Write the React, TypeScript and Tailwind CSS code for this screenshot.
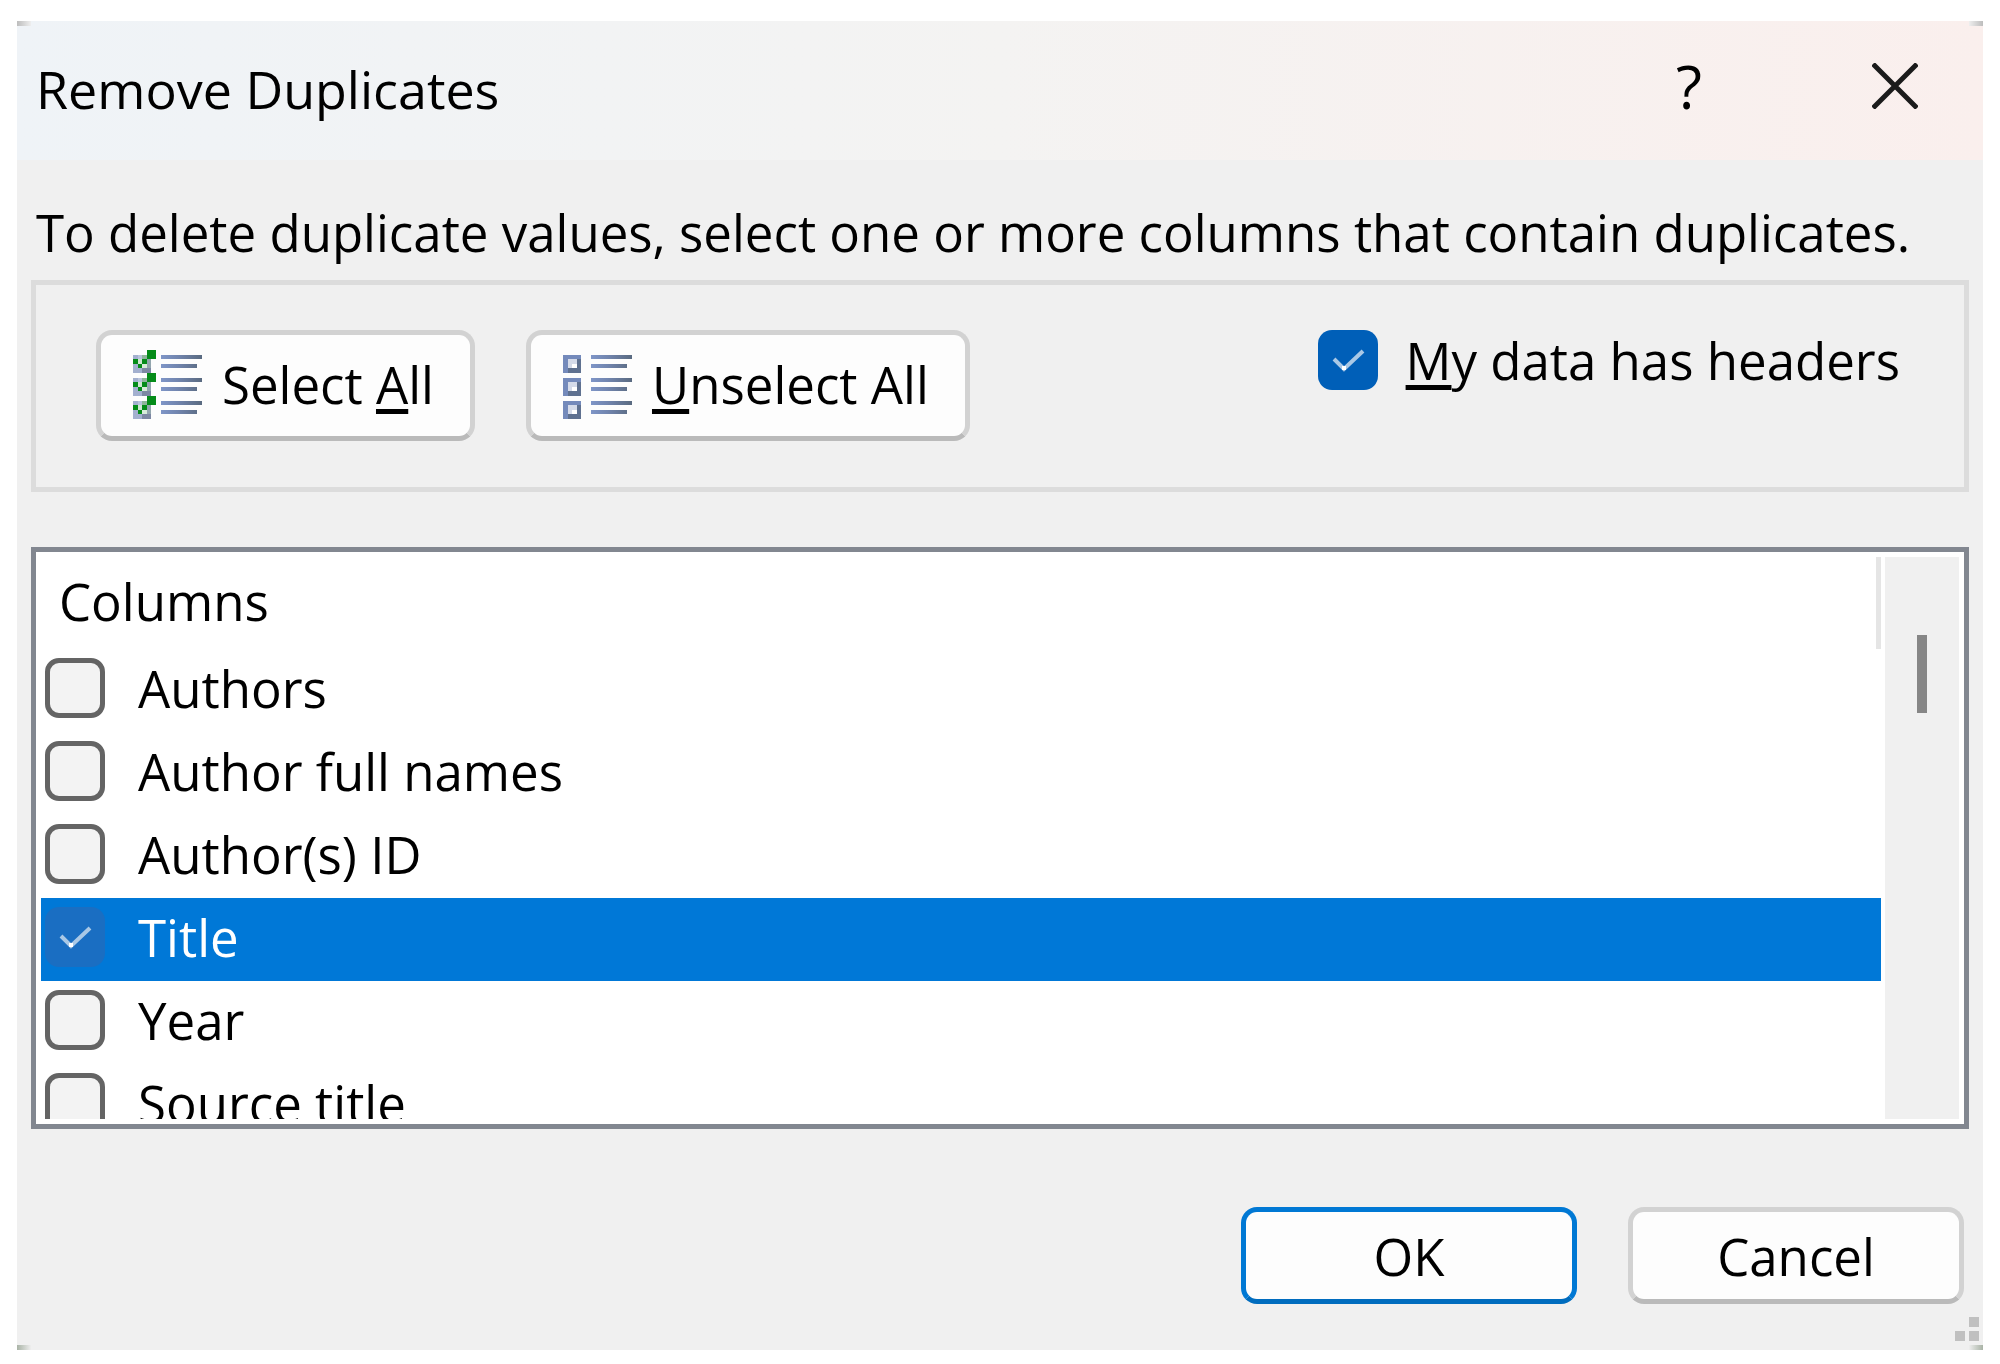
import { ReactNode, useState } from "react";

const initialColumns = [
  { name: "Authors", checked: false },
  { name: "Author full names", checked: false },
  { name: "Author(s) ID", checked: false },
  { name: "Title", checked: true },
  { name: "Year", checked: false },
  { name: "Source title", checked: false },
];

const rowOffsets = [0, 5, 10];

const ListLines = () => (
  <>
    <defs>
      <linearGradient id="line" x1="6" x2="15" y1="0" y2="0" gradientUnits="userSpaceOnUse">
        <stop offset="0" stopColor="#7f96c8" />
        <stop offset="0.4" stopColor="#7286b0" />
        <stop offset="1" stopColor="#5a6a80" />
      </linearGradient>
    </defs>
    {rowOffsets.map((y) => (
      <g key={y} fill="url(#line)">
        <rect x="6" y={y + 1} width="9" height="1" />
        <rect x="6" y={y + 3} width="8" height="1" />
      </g>
    ))}
  </>
);

const SelectAllIcon = () => (
  <svg className="size-[69px] shrink-0" viewBox="0 0 15 15" shapeRendering="crispEdges" aria-hidden="true">
    {rowOffsets.map((y) => (
      <g key={y}>
        <rect x="0" y={y + 1} width="4" height="4" fill="#a3b0cf" />
        <rect x="1" y={y + 1} width="1" height="1" fill="#b9c4dc" />
        <rect x="2" y={y + 1} width="1" height="1" fill="#8fb59b" />
        <rect x="1" y={y + 2} width="1" height="1" fill="#cfe6d2" />
        <rect x="2" y={y + 3} width="1" height="1" fill="#d7ecd9" />
        <rect x="3" y={y + 2} width="1" height="2" fill="#93a6ae" />
        <rect x="2" y={y + 4} width="2" height="1" fill="#7d88a3" />
        <rect x="3" y={y} width="2" height="2" fill="#058c19" />
        <rect x="0" y={y + 2} width="1" height="1" fill="#058c19" />
        <rect x="2" y={y + 2} width="1" height="1" fill="#058c19" />
        <rect x="1" y={y + 3} width="1" height="1" fill="#058c19" />
      </g>
    ))}
    <ListLines />
  </svg>
);

const UnselectAllIcon = () => (
  <svg className="size-[69px] shrink-0" viewBox="0 0 15 15" shapeRendering="crispEdges" aria-hidden="true">
    {rowOffsets.map((y) => (
      <g key={y}>
        <rect x="0" y={y + 1} width="4" height="4" fill="#748abb" />
        <rect x="1" y={y + 4} width="3" height="1" fill="#5f7190" />
        <rect x="3" y={y + 2} width="1" height="3" fill="#5f7190" />
        <rect x="1" y={y + 2} width="2" height="2" fill="#d5dbe9" />
        <rect x="2" y={y + 3} width="1" height="1" fill="#ffffff" />
      </g>
    ))}
    <ListLines />
  </svg>
);

type CheckboxProps = {
  id: string;
  checked: boolean;
  onChange: () => void;
  selected?: boolean;
};

const Checkbox = ({ id, checked, onChange, selected }: CheckboxProps) => (
  <span className="grid size-[60px] shrink-0">
    <input
      id={id}
      type="checkbox"
      checked={checked}
      onChange={onChange}
      className={`col-start-1 row-start-1 size-[60px] appearance-none rounded-[14px] ${
        checked ? (selected ? "bg-[#1a6ec2]" : "bg-[#005fb8]") : "border-[5px] border-[#646464] bg-[#f3f3f3]"
      }`}
    />
    {checked && (
      <svg className="pointer-events-none col-start-1 row-start-1" viewBox="0 0 60 60" fill="none" aria-hidden="true">
        <path d="M16 29 L26 39 L45 21" stroke="#a9c8e6" strokeWidth="4" />
        <rect x="24" y="36" width="4" height="4" fill="#ffffff" />
      </svg>
    )}
  </span>
);

const ToolButton = ({ children, onClick }: { children: ReactNode; onClick: () => void }) => (
  <button
    type="button"
    onClick={onClick}
    className="flex h-[111px] items-center gap-5 rounded-[16px] border-[5px] border-[#d2d2d2] border-b-[#bababa] bg-[#fdfdfd] pr-9 pb-[3px] pl-8"
  >
    {children}
  </button>
);

const AccessKey = ({ children }: { children: string }) => (
  <span className="underline decoration-[5px] underline-offset-[5px]">{children}</span>
);

const App = () => {
  const [columns, setColumns] = useState(initialColumns);
  const [hasHeaders, setHasHeaders] = useState(true);

  const setAll = (checked: boolean) => setColumns(columns.map((c) => ({ ...c, checked })));
  const toggle = (name: string) =>
    setColumns(columns.map((c) => (c.name === name ? { ...c, checked: !c.checked } : c)));

  return (
    <div className="min-h-screen bg-white px-[17px] pt-[21px] pb-[14px] font-['Open_Sans','Noto_Sans',sans-serif] text-[51px] leading-[70px] text-black">
      <div role="dialog" aria-labelledby="dialog-title" className="relative bg-[#f0f0f0]">
        <header className="flex h-[139px] items-center justify-between bg-linear-to-r from-[#eff3f7] via-[#f4f3f2] to-[#faefed] pr-[65px] pb-[3px] pl-[19px]">
          <h1 id="dialog-title" className="text-[52px]">Remove Duplicates</h1>
          <div className="flex items-center gap-[170px] pb-[6px]">
            <button type="button" aria-label="Help" className="text-[60px]">?</button>
            <button type="button" aria-label="Close">
              <svg className="size-[46px]" viewBox="0 0 46 46" stroke="#1b1b1b" strokeWidth="5" aria-hidden="true">
                <path d="M1 1 L45 45 M45 1 L1 45" />
              </svg>
            </button>
          </div>
        </header>

        <div className="px-[14px] pt-[37px] pb-[46px]">
          <p className="pl-[5px] whitespace-nowrap">
            To delete duplicate values, select one or more columns that contain duplicates.
          </p>

          <div className="mt-[13px] flex h-[212px] items-start justify-between border-[5px] border-[#dcdcdc] pt-[45px] pr-[64px] pl-[60px]">
            <div className="flex gap-[51px]">
              <ToolButton onClick={() => setAll(true)}>
                <SelectAllIcon />
                <span>Select <AccessKey>A</AccessKey>ll</span>
              </ToolButton>
              <ToolButton onClick={() => setAll(false)}>
                <UnselectAllIcon />
                <span><AccessKey>U</AccessKey>nselect All</span>
              </ToolButton>
            </div>
            <div className="flex h-[60px] items-center gap-7">
              <Checkbox id="has-headers" checked={hasHeaders} onChange={() => setHasHeaders(!hasHeaders)} />
              <label htmlFor="has-headers"><AccessKey>M</AccessKey>y data has headers</label>
            </div>
          </div>

          <div className="mt-[55px] flex h-[582px] gap-1 border-[5px] border-[#828790] bg-white p-[5px]">
            <div className="flex-1 overflow-hidden">
              <div className="h-[92px] border-r-[5px] border-[#e5e5e5] pt-[9px] pl-[18px]">Columns</div>
              <ul>
                {columns.map((column, i) => (
                  <li
                    key={column.name}
                    className={`flex h-[83px] items-center gap-[33px] pb-[5px] pl-[4px] ${
                      column.name === "Title" ? "bg-[#0078d7] text-white" : ""
                    }`}
                  >
                    <Checkbox
                      id={`column-${i}`}
                      checked={column.checked}
                      selected={column.name === "Title"}
                      onChange={() => toggle(column.name)}
                    />
                    <label htmlFor={`column-${i}`}>{column.name}</label>
                  </li>
                ))}
              </ul>
            </div>
            <div className="flex w-[74px] justify-center bg-[#f0f0f0] pt-[78px]">
              <div className="h-[78px] w-[10px] bg-[#868686]" />
            </div>
          </div>

          <div className="mt-[78px] flex justify-end gap-[51px] pr-[5px]">
            <button type="button" className="h-[97px] w-[336px] rounded-[16px] border-[5px] border-[#0078d4] border-b-[#006cbe] bg-[#fdfdfd]">
              OK
            </button>
            <button type="button" className="h-[97px] w-[336px] rounded-[16px] border-[5px] border-[#d2d2d2] border-b-[#bababa] bg-[#fdfdfd]">
              Cancel
            </button>
          </div>
        </div>

        {/* resize grip */}
        <svg className="absolute right-1 bottom-[9px] size-6" viewBox="0 0 24 24" fill="#c0c0c0" aria-hidden="true">
          <path d="M14 0h10v10h-10z M14 14h10v10h-10z M0 14h10v10h-10z" />
        </svg>

        {/* window corners */}
        <span className="absolute top-0 left-0 h-[5px] w-[14px] bg-linear-to-r from-[#bdbdbd] to-[#eeeeee]" />
        <span className="absolute top-0 right-0 h-[5px] w-[14px] bg-linear-to-l from-[#bdbdbd] to-[#eeeeee]" />
        <span className="absolute bottom-0 left-0 h-[5px] w-[14px] bg-linear-to-r from-[#a9b3a6] to-[#eeeeee]" />
        <span className="absolute right-0 bottom-0 h-[5px] w-[14px] bg-linear-to-l from-[#a9b3a6] to-[#eeeeee]" />
      </div>
    </div>
  );
};

export default App;
